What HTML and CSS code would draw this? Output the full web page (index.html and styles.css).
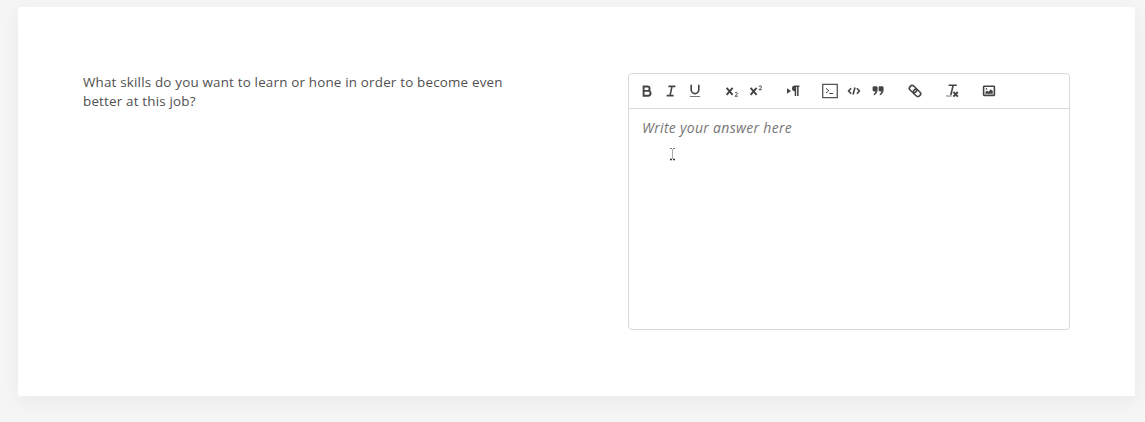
FILE: index.html
```html
<!DOCTYPE html>
<html lang="en">
<head>
<meta charset="utf-8">
<title>Question</title>
<link rel="stylesheet" href="styles.css">
</head>
<body>
<main class="card">
  <p class="question">What skills do you want to learn or hone in order to become even better at this job?</p>
  <section class="editor">
    <div class="toolbar">
      <div class="group">
        <button class="tool" aria-label="Bold"><svg class="icon" viewBox="0 0 18 18"><path class="heavy" d="M5.6 4.5h3.8a2.2 2.2 0 0 1 0 4.4H5.6zM5.6 8.9h4.6a2.4 2.4 0 0 1 0 4.8H5.6z"/></svg></button>
        <button class="tool" aria-label="Italic"><svg class="icon" viewBox="0 0 18 18"><path d="M6.4 4.4h7M4.6 13.6h7M10 4.4 8 13.6"/></svg></button>
        <button class="tool" aria-label="Underline"><svg class="icon" viewBox="0 0 18 18"><path d="M5.2 2.8v5a3.8 3.8 0 0 0 7.6 0v-5"/><path class="light" d="M3.8 14.5h10.4"/></svg></button>
      </div>
      <div class="group">
        <button class="tool" aria-label="Subscript"><svg class="icon" viewBox="0 0 18 18"><path class="heavy" d="m3.6 5.9 6 7M9.6 5.9l-6 7"/><path class="small" d="M12 11.2c.2-1.2 2.5-1.1 2.4.2 0 1-1.6 1.8-2.4 2.8h2.8"/></svg></button>
        <button class="tool" aria-label="Superscript"><svg class="icon" viewBox="0 0 18 18"><path class="heavy" d="m3.6 5.9 6 7M9.6 5.9l-6 7"/><path class="small" d="M12 4.7c.2-1.2 2.5-1.1 2.4.2 0 1-1.6 1.8-2.4 2.8h2.8"/></svg></button>
      </div>
      <div class="group">
        <button class="tool" aria-label="Text direction"><svg class="icon" viewBox="0 0 18 18"><path class="solid" d="m3 6.2 4 2.8-4 2.8zM11 3.6h4.4V5h-.8v9h-1.5V5h-.9v9h-1.5V9.3A2.8 2.8 0 0 1 11 3.6z"/></svg></button>
      </div>
      <div class="group">
        <button class="tool" aria-label="Code block"><svg class="icon" viewBox="0 0 18 18"><path class="frame" d="M1.7 2.4h14.6v13.2H1.7z"/><path class="small" d="m5 6.4 2.8 2.3L5 11M8.3 11.5H12"/></svg></button>
        <button class="tool" aria-label="Inline code"><svg class="icon" viewBox="0 0 18 18"><path d="M6.1 6.2 3.6 9l2.5 2.8M11.9 6.2 14.4 9l-2.5 2.8M10 5.6 8 12.4"/></svg></button>
        <button class="tool" aria-label="Quote"><svg class="icon" viewBox="0 0 18 18"><path class="solid" d="M4.2 4.2h3.4l1 1v2.9c0 2.6-1.6 4.6-3.8 5.3v-1.6c1.1-.7 1.5-1.4 1.6-2.3H4.7L3.6 8.4V5.2zM10.2 4.2h3.4l1 1v2.9c0 2.6-1.6 4.6-3.8 5.3v-1.6c1.1-.7 1.5-1.4 1.6-2.3h-1.7L9.6 8.4V5.2z"/></svg></button>
      </div>
      <div class="group">
        <button class="tool" aria-label="Link"><svg class="icon" viewBox="0 0 18 18"><g transform="rotate(42 9 9)"><rect x="2.3" y="6.2" width="8" height="5.4" rx="2.7"/><rect x="7.7" y="6.4" width="8" height="5.4" rx="2.7"/></g></svg></button>
      </div>
      <div class="group">
        <button class="tool" aria-label="Clear formatting"><svg class="icon" viewBox="0 0 18 18"><path d="M5.6 3.2h8.2M10.2 3.2 7.8 13"/><path class="light" d="M3 14h5.6"/><path class="heavy" d="m10.4 10 4.4 4.6M14.8 10l-4.4 4.6"/></svg></button>
      </div>
      <div class="group">
        <button class="tool" aria-label="Image"><svg class="icon" viewBox="0 0 18 18"><rect x="3.6" y="4.2" width="10.8" height="9.2" rx=".6"/><path class="solid" d="M5.4 11.7V9.8l1.8-1 1.4 1 2.2-2.5 2 1.6v2.8z"/><circle class="solid" cx="6.5" cy="6.9" r=".8"/></svg></button>
      </div>
    </div>
    <div class="content">
      <p class="placeholder">Write your answer here</p>
      <svg class="cursor" viewBox="0 0 7 14"><path class="beam" d="M3.5 2v10"/><path class="caps" d="M1 1.5h2M4 1.5h2"/><path class="base" d="M1 12.5h2M4 12.5h2"/></svg>
    </div>
  </section>
</main>
</body>
</html>
```
FILE: styles.css
```css
* { box-sizing: border-box; }
body {
  margin: 0;
  height: 422px;
  overflow: hidden;
  padding: 7px 10px 27px 18px;
  background: #f5f5f5;
  color: #505050;
  font-family: "Open Sans", sans-serif;
}
.card {
  display: flex;
  justify-content: space-between;
  align-items: flex-start;
  height: 388.5px;
  padding: 65.5px 65px 0;
  background: #fff;
  border-radius: 2px;
  box-shadow: 0 5px 20px rgba(0, 0, 0, .05);
}
.question {
  width: 440px;
  margin: .5px 0 0;
  font-size: 13.4px;
  letter-spacing: .19px;
  line-height: 19px;
}
.editor {
  display: flex;
  flex-direction: column;
  width: 442px;
  height: 257px;
  border: 1px solid #d9d9d9;
  border-radius: 4px;
}
.toolbar {
  display: flex;
  gap: 13px;
  height: 35px;
  padding: 0 6px;
  border-bottom: 1px solid #d9d9d9;
}
.group { display: flex; align-items: center; }
.tool {
  display: flex;
  justify-content: center;
  width: 24px;
  padding: 0;
  border: 0;
  background: none;
}
.icon {
  width: 18px;
  height: 18px;
  fill: none;
  stroke: #444;
  stroke-width: 1.6;
}
.icon .heavy { stroke-width: 1.9; }
.icon .light { stroke: #777; stroke-width: 1; }
.icon .small { stroke-width: 1; }
.icon .frame { stroke: #555; stroke-width: 1.3; }
.icon .solid { fill: #444; stroke: none; }
.content { position: relative; flex: 1; padding: 9px 13px; }
.placeholder {
  margin: 0;
  color: #767676;
  font-size: 14px;
  font-style: italic;
  letter-spacing: .3px;
  line-height: 20px;
}
.cursor {
  position: absolute;
  left: 40px;
  top: 38px;
  width: 7px;
  height: 14px;
  fill: none;
}
.beam { stroke: #aaa; stroke-width: 1; }
.caps { stroke: #777; stroke-width: 1; }
.base { stroke: #333; stroke-width: 1.4; }
```
